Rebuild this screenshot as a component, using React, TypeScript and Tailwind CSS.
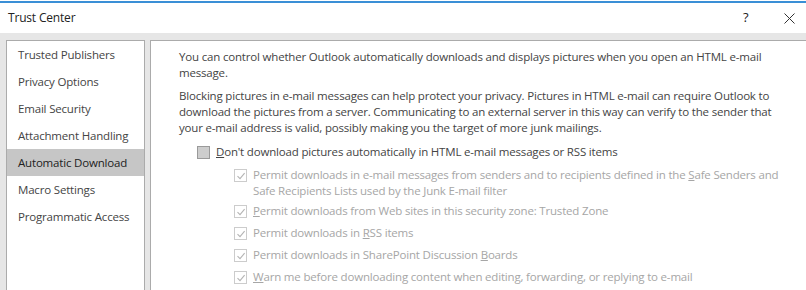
import React from "react";

const font = { fontFamily: '"Open Sans", "Noto Sans", sans-serif' };

const navItems = [
  "Trusted Publishers",
  "Privacy Options",
  "Email Security",
  "Attachment Handling",
  "Automatic Download",
  "Macro Settings",
  "Programmatic Access",
];

const CheckMark = () => (
  <svg width="10" height="10" viewBox="0 0 10 10" className="block">
    <path d="M1.5 5.2 L4 7.6 L8.6 2.2" fill="none" stroke="#b4b4b4" strokeWidth="1.1" />
  </svg>
);

const SubOption: React.FC<{ children: React.ReactNode }> = ({ children }) => (
  <div className="flex items-start gap-[6px]">
    <div className="mt-[2px] flex h-[13px] w-[13px] shrink-0 items-center justify-center border border-[#cccccc] bg-white">
      <CheckMark />
    </div>
    <div className="whitespace-nowrap leading-[16px]">{children}</div>
  </div>
);

const App: React.FC = () => {
  return (
    <div
      className="h-[290px] w-[806px] overflow-hidden bg-[#e6e6e6] text-[11.5px] tracking-[-0.18px] text-[#444444]"
      style={font}
    >
      <div className="h-px bg-white" />
      <div className="h-[2px] bg-[#3a8fd6]" />
      <div className="flex h-[30px] items-center bg-white pl-[8px] text-[12px] text-[#222222]">
        <span className="flex-1">Trust Center</span>
        <span className="w-[14px] text-[13px]">?</span>
        <svg width="11" height="11" viewBox="0 0 11 11" className="ml-[27px] mr-[11px]">
          <path d="M0.5 0.5 L10.5 10.5 M10.5 0.5 L0.5 10.5" stroke="#333333" strokeWidth="1" />
        </svg>
      </div>

      <div className="flex gap-[5px] pl-[6px] pt-[7px]">
        <div className="h-[260px] w-[139px] shrink-0 border border-[#ababab] bg-white">
          {navItems.map((item) => (
            <div
              key={item}
              className={`flex h-[27px] items-center pl-[11px] ${
                item === "Automatic Download" ? "bg-[#c6c6c6] text-[#222222]" : ""
              }`}
            >
              {item}
            </div>
          ))}
        </div>

        <div className="h-[260px] flex-1 border-l border-t border-[#ababab] bg-white pl-[28px] pt-[8px]">
          <p className="whitespace-nowrap leading-[16px]">
            You can control whether Outlook automatically downloads and displays pictures when you open an HTML e-mail
            <br />
            message.
          </p>
          <p className="mt-[7px] whitespace-nowrap leading-[16px]">
            Blocking pictures in e-mail messages can help protect your privacy. Pictures in HTML e-mail can require Outlook to
            <br />
            download the pictures from a server. Communicating to an external server in this way can verify to the sender that
            <br />
            your e-mail address is valid, possibly making you the target of more junk mailings.
          </p>

          <div className="mt-[8px] flex items-center gap-[6px] pl-[18px]">
            <div className="h-[13px] w-[13px] border border-[#9a9a9a] bg-[#cdcdcd]" />
            <span className="leading-[16px]">
              <span className="underline">D</span>on't download pictures automatically in HTML e-mail messages or RSS items
            </span>
          </div>

          <div className="mt-[7px] flex flex-col gap-[6px] pl-[55px] text-[#a6a6a6]">
            <SubOption>
              Permit downloads in e-mail messages from senders and to recipients defined in the{" "}
              <span className="underline">S</span>afe Senders and
              <br />
              Safe Recipients Lists used by the Junk E-mail filter
            </SubOption>
            <div className="-mt-[2px]">
              <SubOption>
                <span className="underline">P</span>ermit downloads from Web sites in this security zone: Trusted Zone
              </SubOption>
            </div>
            <SubOption>
              Permit downloads in <span className="underline">R</span>SS items
            </SubOption>
            <SubOption>
              Permit downloads in SharePoint Discussion <span className="underline">B</span>oards
            </SubOption>
            <SubOption>
              <span className="underline">W</span>arn me before downloading content when editing, forwarding, or replying to
              e-mail
            </SubOption>
          </div>
        </div>
      </div>
    </div>
  );
};

export default App;
